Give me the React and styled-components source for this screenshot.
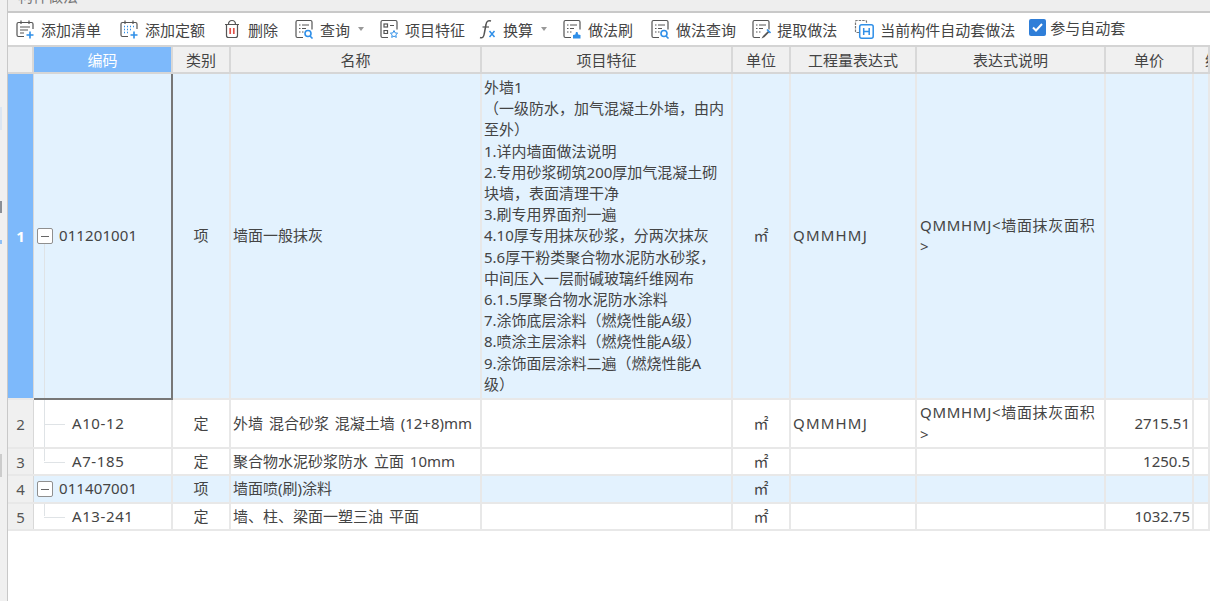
import React from 'react';
import styled, { createGlobalStyle } from 'styled-components';

const GRID = '26px 139px 58px 251px 251px 58px 126px 189px 88px 1fr';

const Global = createGlobalStyle`
  html, body { margin: 0; padding: 0; background: #fff; overflow: hidden; }
  body { font-family: "Noto Sans", "Noto Sans CJK SC", sans-serif; color: #444; }
`;

const Page = styled.div`
  width: 1210px;
  height: 601px;
  display: flex;
  overflow: hidden;
`;

const SideStrip = styled.div`
  position: relative;
  width: 7px;
  flex: none;
  background: #f0f0f0;
  border-right: 1px solid #c8c8c8;
`;

const StripMark = styled.span`
  position: absolute;
  left: 0;
  top: ${p => p.$top}px;
  width: 2px;
  height: ${p => p.$height}px;
  background: ${p => p.$color};
`;

const Main = styled.div`
  flex: 1;
  min-width: 0;
  display: flex;
  flex-direction: column;
`;

const TitleBar = styled.div`
  height: 11px;
  background: #eeeeee;
  border-bottom: 2px solid #c9c9c9;
  overflow: hidden;
  padding-left: 10px;
  font-size: 15px;
  line-height: 1px;
  color: #777;
`;

const TitleText = styled.div`
  margin-top: -4px;
`;

const Toolbar = styled.div`
  height: 32px;
  display: flex;
  align-items: center;
  padding-left: 7px;
  background: #fff;
  border-bottom: 2px solid #d4d4d4;
`;

const ToolButton = styled.div`
  display: flex;
  align-items: center;
  gap: 6px;
  margin-right: ${p => p.$gap}px;
  font-size: 15px;
  white-space: nowrap;
  color: #444;
`;

const Caret = styled.span`
  width: 0;
  height: 0;
  margin-left: 2px;
  border: 3px solid transparent;
  border-top: 4px solid #999;
  border-bottom: 0;
`;

const CheckWrap = styled.label`
  display: flex;
  align-items: center;
  gap: 4px;
  font-size: 15px;
  color: #444;
  margin-top: -4px;
`;

const CheckBox = styled.span`
  width: 17px;
  height: 17px;
  border-radius: 2px;
  background: #2f7ed8;
  display: flex;
  align-items: center;
  justify-content: center;
`;

const Row = styled.div`
  display: grid;
  grid-template-columns: ${GRID};
  height: ${p => p.$height}px;
  background: ${p => (p.$tint ? '#e3f2fe' : '#fff')};
  border-bottom: 2px solid #e8e8e8;
  box-sizing: border-box;
`;

const HeaderRow = styled(Row)`
  background: #f0f0f0;
  border-bottom: 2px solid #d6d6d6;
`;

const HeaderCell = styled.div`
  display: flex;
  align-items: center;
  justify-content: ${p => (p.$clipped ? 'flex-start' : 'center')};
  padding-left: ${p => (p.$clipped ? 11 : 0)}px;
  font-size: 15px;
  color: ${p => (p.$active ? '#fff' : '#444')};
  background: ${p => (p.$active ? '#7db9fb' : 'transparent')};
  border-right: 2px solid #d8d8d8;
  overflow: hidden;
  white-space: nowrap;
`;

const NumCell = styled.div`
  display: flex;
  align-items: center;
  justify-content: center;
  font-size: 15px;
  font-weight: ${p => (p.$active ? 700 : 400)};
  color: ${p => (p.$active ? '#fff' : '#555')};
  background: ${p => (p.$active ? '#7db9fb' : '#f0f0f0')};
  border-right: 1px solid #d8d8d8;
`;

const Cell = styled.div`
  display: flex;
  align-items: center;
  justify-content: ${p => p.$align || 'flex-start'};
  padding: 0 ${p => p.$right || 2}px 0 2px;
  font-size: 15px;
  line-height: 21.2px;
  word-spacing: 2px;
  color: #444;
  border-right: 2px solid #e8e8e8;
  box-sizing: border-box;
  min-width: 0;
  word-break: break-all;
`;

const CodeCell = styled(Cell)`
  position: relative;
  padding-left: ${p => (p.$leaf ? 38 : 25)}px;
  letter-spacing: ${p => (p.$leaf ? 0.6 : 0.1)}px;
  ${p => p.$selected && `
    border-right: 2px solid #777;
    border-bottom: 2px solid #777;
    margin-bottom: -2px;
  `}
`;

const Toggle = styled.span`
  position: absolute;
  left: 3px;
  top: 50%;
  margin-top: -8px;
  width: 16px;
  height: 16px;
  background: #fff;
  border: 1px solid #8f8f8f;
  border-radius: 2px;
  box-sizing: border-box;
  display: flex;
  align-items: center;
  justify-content: center;
  z-index: 1;
  &::after {
    content: '';
    width: 8px;
    height: 1px;
    background: #666;
  }
`;

const TreeV = styled.span`
  position: absolute;
  left: 10px;
  top: ${p => p.$top}px;
  bottom: ${p => p.$bottom}px;
  width: 1px;
  background: #dfe3e6;
`;

const TreeH = styled.span`
  position: absolute;
  left: 10px;
  top: 50%;
  width: 21px;
  height: 1px;
  background: #dfe3e6;
`;

const Expr = styled.span`
  letter-spacing: 1.2px;
`;

const Note = styled.div`
  margin-left: 1px;
  letter-spacing: 0.7px;
`;

const FeatureText = styled.div`
  white-space: pre-line;
`;

const Outline = p => (
  <svg width="20" height="20" viewBox="0 0 20 20" fill="none" stroke="#555" strokeWidth="1.2" {...p} />
);

const BLUE = '#2f8fe8';

const IconList = ({ dotted }) => (
  <Outline>
    <path d="M9 17.500H3.500A1.500 1.500 0 0 1 2 16V5a1.500 1.500 0 0 1 1.500-1.500h13A1.500 1.500 0 0 1 18 5v5" />
    <path d="M6 1.500v3.500M14 1.500v3.500" />
    {dotted ? (
      <path d="M5 7.500h1M8 7.500h1M11 7.500h1M14 7.500h1M5 10.500h1M8 10.500h1M11 10.500h1M5 13.500h1M8 13.500h1" stroke={BLUE} strokeWidth="1.400" />
    ) : (
      <path d="M5 8h10M5 11h8M5 14h4" />
    )}
    <path d="M15 12.500v7M11.500 16h7" stroke={BLUE} strokeWidth="1.600" />
  </Outline>
);

const IconTrash = () => (
  <Outline>
    <path d="M3 5.500h14M6.500 5.500c0-2.500 1-4 3.500-4s3.500 1.500 3.500 4" />
    <path d="M4.500 5.500v11a2 2 0 0 0 2 2h7a2 2 0 0 0 2-2v-11" />
    <path d="M8.200 9v6M11.800 9v6" stroke="#e0524a" strokeWidth="1.700" />
  </Outline>
);

const Sheet = ({ children }) => (
  <Outline>
    <path d="M9 18.500H3.500A1.500 1.500 0 0 1 2 17V3A1.500 1.500 0 0 1 3.500 1.500h13A1.500 1.500 0 0 1 18 3v7.500" />
    <path d="M5 6h1.500M8 6h7M5 9.500h1.500M8 9.500h4M5 13h1.500M8 13h1.500" />
    {children}
  </Outline>
);

const Lens = () => (
  <g stroke={BLUE} strokeWidth="1.600">
    <circle cx="14" cy="14.500" r="3" />
    <path d="M16 17l2.500 2.500" />
  </g>
);

const IconFeature = () => (
  <Outline>
    <path d="M9 18.500H3.500A1.500 1.500 0 0 1 2 17V3A1.500 1.500 0 0 1 3.500 1.500h13A1.500 1.500 0 0 1 18 3v7.500" />
    <rect x="5" y="5" width="3.500" height="3" />
    <path d="M11 6.500h4M5 11.500h3.500v3H5z" />
    <path d="M15 11.500l1.100 2.400 2.500.3-1.800 1.700.5 2.500-2.300-1.300-2.300 1.300.5-2.500-1.800-1.700 2.500-.3z" stroke={BLUE} strokeWidth="1" />
  </Outline>
);

const IconBrush = () => (
  <Sheet>
    <path d="M11 19.500V16l2.300-.6.700-2.400h1.500l.7 2.400 2.300.6v3.500z" fill={BLUE} stroke="none" />
  </Sheet>
);

const IconPick = () => (
  <Sheet>
    <path d="M17 12l-5 5-1.500 2.500 2.800-1.200 5-5z" fill="#555" stroke="none" />
    <path d="M16 10.500l3.500 3.500" stroke={BLUE} strokeWidth="1.600" />
  </Sheet>
);

const IconAuto = () => (
  <Outline>
    <path d="M5 13.500H2.500a1 1 0 0 1-1-1V2.500a1 1 0 0 1 1-1h9a1 1 0 0 1 1 1V4" stroke="#777" strokeDasharray="2.500 1" />
    <rect x="5.700" y="5.700" width="13.500" height="13.500" rx="2" stroke={BLUE} strokeWidth="1.500" />
    <path d="M9.700 9v7M15.200 9v7M9.700 12.500h5.500" stroke={BLUE} strokeWidth="1.500" />
  </Outline>
);

const IconFx = () => (
  <svg width="18" height="20" viewBox="0 0 18 20" fill="none">
    <path d="M1 18.500c2.500 1 3.700-.5 4.200-3.500L7 5.500C7.500 2.500 9 1 12 2" stroke="#555" strokeWidth="1.500" />
    <path d="M3.500 8H10" stroke="#555" strokeWidth="1.200" />
    <path d="M10.500 12l5 6M15.500 12l-5 6" stroke={BLUE} strokeWidth="1.500" />
  </svg>
);

const tools = [
  { label: '添加清单', icon: <IconList />, gap: 18 },
  { label: '添加定额', icon: <IconList dotted />, gap: 17 },
  { label: '删除', icon: <IconTrash />, gap: 16 },
  { label: '查询', icon: <Sheet><Lens /></Sheet>, gap: 15, caret: true },
  { label: '项目特征', icon: <IconFeature />, gap: 14 },
  { label: '换算', icon: <IconFx />, gap: 15, caret: true },
  { label: '做法刷', icon: <IconBrush />, gap: 17 },
  { label: '做法查询', icon: <Sheet><Lens /></Sheet>, gap: 15 },
  { label: '提取做法', icon: <IconPick />, gap: 17 },
  { label: '当前构件自动套做法', icon: <IconAuto />, gap: 14 },
];

const heads = ['', '编码', '类别', '名称', '项目特征', '单位', '工程量表达式', '表达式说明', '单价', '综合单价'];

const feature = `外墙1
（一级防水，加气混凝土外墙，由内至外）
1.详内墙面做法说明
2.专用砂浆砌筑200厚加气混凝土砌块墙，表面清理干净
3.刷专用界面剂一遍
4.10厚专用抹灰砂浆，分两次抹灰
5.6厚干粉类聚合物水泥防水砂浆，中间压入一层耐碱玻璃纤维网布
6.1.5厚聚合物水泥防水涂料
7.涂饰底层涂料（燃烧性能A级）
8.喷涂主层涂料（燃烧性能A级）
9.涂饰面层涂料二遍（燃烧性能A
级）`;

const rows = [
  { n: 1, h: 326, tint: true, code: '011201001', kind: '项', name: '墙面一般抹灰', feature, expr: 'QMMHMJ', note: 'QMMHMJ<墙面抹灰面积>', selected: true, v: [170, 0] },
  { n: 2, h: 49, code: 'A10-12', leaf: true, kind: '定', name: '外墙 混合砂浆 混凝土墙 (12+8)mm', expr: 'QMMHMJ', note: 'QMMHMJ<墙面抹灰面积>', price: '2715.51', v: [0, 0] },
  { n: 3, h: 27, code: 'A7-185', leaf: true, kind: '定', name: '聚合物水泥砂浆防水 立面 10mm', price: '1250.5', v: [0, 13] },
  { n: 4, h: 28, tint: true, code: '011407001', kind: '项', name: '墙面喷(刷)涂料' },
  { n: 5, h: 27, code: 'A13-241', leaf: true, kind: '定', name: '墙、柱、梁面一塑三油 平面', price: '1032.75', v: [0, 13] },
];

export default function App() {
  return (
    <Page>
      <Global />
      <SideStrip>
        <StripMark $top={107} $height={23} $color="#dce6f2" />
        <StripMark $top={201} $height={12} $color="#8a8f96" />
        <StripMark $top={240} $height={4} $color="#8fc0f5" />
        <StripMark $top={454} $height={23} $color="#cccccc" />
      </SideStrip>
      <Main>
        <TitleBar><TitleText>构件做法</TitleText></TitleBar>
        <Toolbar>
          {tools.map(t => (
            <ToolButton key={t.label} $gap={t.gap}>
              {t.icon}
              {t.label}
              {t.caret && <Caret />}
            </ToolButton>
          ))}
          <CheckWrap>
            <CheckBox>
              <svg width="13" height="13" viewBox="0 0 13 13" fill="none">
                <path d="M2 6.500l3 3 6-6.500" stroke="#fff" strokeWidth="2" />
              </svg>
            </CheckBox>
            参与自动套
          </CheckWrap>
        </Toolbar>
        <HeaderRow $height={27}>
          {heads.map((h, i) => (
            <HeaderCell key={i} $active={i === 1} $clipped={i === 9}>{h}</HeaderCell>
          ))}
        </HeaderRow>
        {rows.map(r => (
          <Row key={r.n} $height={r.h} $tint={r.tint}>
            <NumCell $active={r.selected}>{r.n}</NumCell>
            <CodeCell $leaf={r.leaf} $selected={r.selected}>
              {r.v && <TreeV $top={r.v[0]} $bottom={r.v[1]} />}
              {r.leaf && <TreeH />}
              {!r.leaf && <Toggle />}
              {r.code}
            </CodeCell>
            <Cell $align="center">{r.kind}</Cell>
            <Cell>{r.name}</Cell>
            <Cell><FeatureText>{r.feature}</FeatureText></Cell>
            <Cell $align="center">㎡</Cell>
            <Cell><Expr>{r.expr}</Expr></Cell>
            <Cell $right={8}><Note>{r.note}</Note></Cell>
            <Cell $align="flex-end">{r.price}</Cell>
            <Cell />
          </Row>
        ))}
      </Main>
    </Page>
  );
}
